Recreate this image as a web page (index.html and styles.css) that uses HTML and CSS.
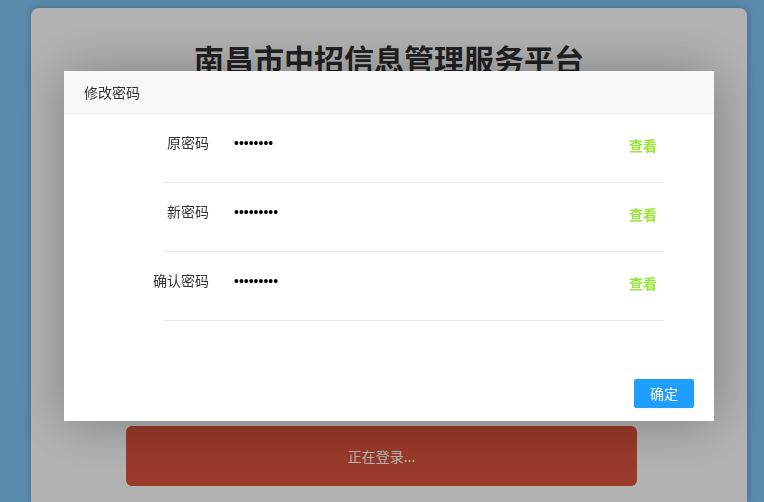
FILE: index.html
```html
<!DOCTYPE html>
<html lang="zh-CN">
<head>
  <meta charset="UTF-8">
  <meta name="viewport" content="width=device-width, initial-scale=1">
  <title>南昌市中招信息管理服务平台</title>
  <link rel="stylesheet" href="styles.css">
</head>
<body>
  <!-- 登录卡片 -->
  <div class="login-card">
    <h1 class="login-title">南昌市中招信息管理服务平台</h1>
    <div class="login-form">
      <input class="login-input" type="text" placeholder="用户名">
      <input class="login-input" type="password" placeholder="密码">
    </div>
    <button class="login-btn">正在登录...</button>
  </div>

  <!-- 遮罩层 -->
  <div class="layer-shade"></div>

  <!-- 修改密码弹窗 -->
  <div class="layer">
    <div class="layer-title">修改密码</div>
    <div class="layer-content">
      <div class="pwd-item">
        <label class="pwd-label">原密码</label>
        <input class="pwd-input" type="password" value="12345678">
        <span class="pwd-view">查看</span>
      </div>
      <div class="pwd-item">
        <label class="pwd-label">新密码</label>
        <input class="pwd-input" type="password" value="123456789">
        <span class="pwd-view">查看</span>
      </div>
      <div class="pwd-item">
        <label class="pwd-label">确认密码</label>
        <input class="pwd-input" type="password" value="123456789">
        <span class="pwd-view">查看</span>
      </div>
    </div>
    <div class="layer-btns">
      <button class="layer-btn">确定</button>
    </div>
  </div>
</body>
</html>
```

FILE: styles.css
```css
/* 页面背景 */
html, body {
  overflow: hidden;
}
body {
  margin: 0;
  padding: 8px 0 0 31px;
  background: #83c9fa;
  font-family: "Noto Sans CJK SC", "Liberation Sans", sans-serif;
  height: 502px;
  box-sizing: border-box;
}

/* 登录卡片 */
.login-card {
  width: 716px;
  height: 494px;
  background: #fff;
  border-radius: 8px 8px 0 0;
  box-shadow: 0 0 10px rgba(0, 0, 0, 0.25);
  padding-top: 30px;
  box-sizing: border-box;
}
.login-title {
  margin: 0;
  font-size: 30px;
  line-height: 40px;
  font-weight: 700;
  color: #303030;
  text-align: center;
}
.login-form {
  height: 348px;
  display: flex;
  flex-direction: column;
  gap: 20px;
  padding: 40px 110px 0 95px;
  box-sizing: border-box;
}
.login-input {
  height: 50px;
  border: 1px solid #ddd;
  border-radius: 6px;
}
.login-btn {
  display: block;
  margin-left: 95px;
  width: 511px;
  height: 60px;
  padding-bottom: 2px;
  border: none;
  border-radius: 6px;
  background: #dd533b;
  color: #fff;
  font-family: inherit;
  font-size: 14px;
}

/* 遮罩 */
.layer-shade {
  position: fixed;
  inset: 0;
  background: #000;
  opacity: 0.3;
}

/* 弹窗 */
.layer {
  position: fixed;
  left: 64px;
  top: 71px;
  width: 650px;
  height: 350px;
  background: #fff;
  box-shadow: 1px 1px 50px rgba(0, 0, 0, 0.3);
  display: flex;
  flex-direction: column;
}
.layer-title {
  height: 42px;
  line-height: 42px;
  padding-left: 20px;
  background: #f8f8f8;
  border-bottom: 1px solid #eee;
  font-size: 14px;
  color: #333;
}
.layer-content {
  flex: 1;
}
.pwd-item {
  display: flex;
  align-items: flex-start;
  margin-left: 100px;
  width: 500px;
  height: 69px;
  padding-top: 18px;
  box-sizing: border-box;
  border-bottom: 1px solid #e6e6e6;
}
.pwd-label {
  width: 110px;
  margin-left: -50px;
  padding-right: 15px;
  box-sizing: border-box;
  text-align: right;
  font-size: 14px;
  line-height: 20px;
  color: #333;
  flex-shrink: 0;
}
.pwd-input {
  flex: 1;
  height: 20px;
  margin-top: 1px;
  padding: 0 0 0 10px;
  border: none;
  outline: none;
  font-family: "Liberation Sans", sans-serif;
  font-size: 14px;
  color: #000;
}
.pwd-view {
  margin: 3px 7px 0 0;
  font-size: 14px;
  line-height: 20px;
  font-weight: 700;
  color: #9be63c;
}
.layer-btns {
  padding: 0 20px 13px;
  text-align: right;
}
.layer-btn {
  height: 29px;
  padding: 0 16px 2px;
  border: none;
  border-radius: 2px;
  background: #1e9fff;
  color: #fff;
  font-family: inherit;
  font-size: 14px;
}
```
